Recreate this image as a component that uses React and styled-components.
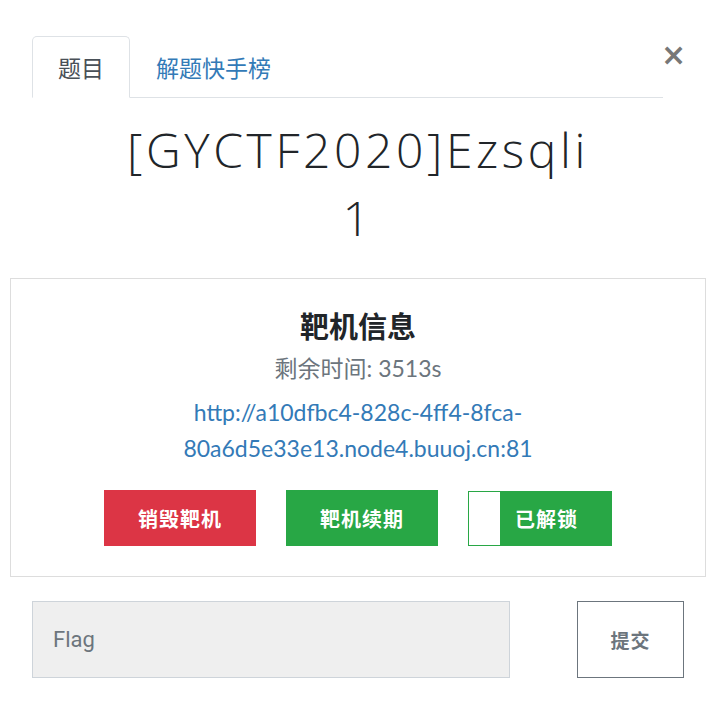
import React from "react";
import styled, { createGlobalStyle } from "styled-components";

const Global = createGlobalStyle`
  html, body { margin: 0; padding: 0; background: #fff; }
  body { font-family: Lato, "Noto Sans CJK SC", sans-serif; color: #212529; }
  * { box-sizing: border-box; }
`;

const Modal = styled.div`
  width: 722px;
  padding: 36px 16px 40px 10px;
  display: flex;
  flex-direction: column;
`;

const Header = styled.div`
  display: flex;
  align-items: flex-start;
  padding-left: 22px;
`;

const Tabs = styled.ul`
  list-style: none;
  margin: 0;
  padding: 0;
  width: 631px;
  display: flex;
  border-bottom: 1px solid #dee2e6;
`;

const Tab = styled.li`
  margin-bottom: ${(p) => (p.$active ? "-1px" : "0")};
  padding: 13px 25px;
  height: ${(p) => (p.$active ? "62px" : "61px")};
  font-size: 23px;
  line-height: 34px;
  font-family: "Noto Sans CJK SC", sans-serif;
  font-weight: 400;
  color: ${(p) => (p.$active ? "#495057" : "#337ab7")};
  background: #fff;
  border: 1px solid ${(p) => (p.$active ? "#dee2e6" : "transparent")};
  border-bottom: ${(p) => (p.$active ? "1px solid #fff" : "0")};
  border-radius: 5px 5px 0 0;
`;

const Close = styled.button`
  border: 0;
  background: none;
  padding: 0;
  margin: 4px 0 0 -2px;
  width: 20px;
  font-family: "DejaVu Sans", sans-serif;
  font-weight: 700;
  font-size: 30px;
  line-height: 30px;
  color: #777;
`;

const Title = styled.h1`
  margin: 18px auto 26px;
  width: 490px;
  text-align: center;
  font-family: "Open Sans", sans-serif;
  font-weight: 300;
  font-size: 48px;
  line-height: 68px;
  letter-spacing: 3.6px;
  color: #212529;
`;

const Card = styled.div`
  border: 1px solid #ddd;
  height: 299px;
  padding-top: 27px;
  display: flex;
  flex-direction: column;
  align-items: center;
`;

const CardTitle = styled.h3`
  margin: 0;
  font-family: Lato, "Noto Sans CJK SC", sans-serif;
  font-weight: 700;
  font-size: 29px;
  line-height: 42px;
  color: #212529;
`;

const Remain = styled.div`
  margin-top: 5px;
  font-size: 23px;
  line-height: 30px;
  color: #6c757d;
  font-family: Lato, "Noto Sans CJK SC", sans-serif;
`;

const Link = styled.a`
  margin-top: 11px;
  width: 420px;
  text-align: center;
  font-size: 23px;
  line-height: 36px;
  color: #337ab7;
  text-decoration: none;
`;

const Buttons = styled.div`
  margin-top: 24px;
  display: flex;
  gap: 30px;
  align-items: center;
`;

const ActionButton = styled.button`
  width: 152px;
  height: 56px;
  border: 0;
  border-radius: 0;
  background: ${(p) => p.$bg};
  color: #fff;
  font-family: "Noto Sans CJK SC", sans-serif;
  font-weight: 700;
  font-size: 20px;
  letter-spacing: 1px;
`;

const Toggle = styled.div`
  width: 144px;
  height: 55px;
  margin-top: 1px;
  border: 1px solid #28a745;
  background: #28a745;
  display: flex;
`;

const Knob = styled.span`
  width: 31px;
  background: #fff;
`;

const ToggleLabel = styled.span`
  flex: 1;
  display: flex;
  align-items: center;
  justify-content: center;
  padding-right: 18px;
  color: #fff;
  font-family: "Noto Sans CJK SC", sans-serif;
  font-weight: 700;
  font-size: 20px;
  letter-spacing: 1px;
`;

const FlagRow = styled.form`
  margin-top: 24px;
  padding-left: 22px;
  display: flex;
  align-items: stretch;
`;

const FlagInput = styled.input`
  width: 478px;
  height: 77px;
  background: #efefef;
  border: 1px solid #ced4da;
  border-radius: 0;
  padding: 0 20px;
  font-family: Roboto, sans-serif;
  font-size: 22px;
  color: #495057;
  &::placeholder { color: #6c757d; }
`;

const Submit = styled.button`
  margin-left: 67px;
  width: 107px;
  height: 77px;
  background: #fff;
  border: 1px solid #6c757d;
  border-radius: 0;
  color: #6c757d;
  font-family: "Noto Sans CJK SC", sans-serif;
  font-weight: 700;
  font-size: 19px;
  letter-spacing: 1px;
`;

export default function App() {
  return (
    <>
      <Global />
      <Modal>
        <Header>
          <Tabs>
            <Tab $active>题目</Tab>
            <Tab>解题快手榜</Tab>
          </Tabs>
          <Close aria-label="close">×</Close>
        </Header>
        <Title>[GYCTF2020]Ezsqli 1</Title>
        <Card>
          <CardTitle>靶机信息</CardTitle>
          <Remain>剩余时间: 3513s</Remain>
          <Link href="#">http://a10dfbc4-828c-4ff4-8fca-80a6d5e33e13.node4.buuoj.cn:81</Link>
          <Buttons>
            <ActionButton $bg="#dc3545">销毁靶机</ActionButton>
            <ActionButton $bg="#28a745">靶机续期</ActionButton>
            <Toggle>
              <Knob />
              <ToggleLabel>已解锁</ToggleLabel>
            </Toggle>
          </Buttons>
        </Card>
        <FlagRow onSubmit={(e) => e.preventDefault()}>
          <FlagInput placeholder="Flag" />
          <Submit type="submit">提交</Submit>
        </FlagRow>
      </Modal>
    </>
  );
}
